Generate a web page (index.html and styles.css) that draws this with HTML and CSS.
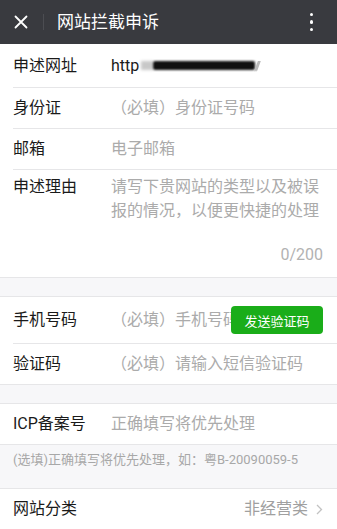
FILE: index.html
```html
<!DOCTYPE html>
<html lang="zh-CN">
<head>
  <meta charset="UTF-8">
  <meta name="viewport" content="width=device-width, initial-scale=1.0">
  <title>网站拦截申诉</title>
  <link rel="stylesheet" href="styles.css">
</head>
<body>

  <!-- Top bar -->
  <header class="topbar">
    <svg class="close-icon" width="14" height="14" viewBox="0 0 14 14">
      <path d="M1.5 1.5L12.5 12.5M12.5 1.5L1.5 12.5" stroke="#fff" stroke-width="1.8" stroke-linecap="round"/>
    </svg>
    <span class="topbar-divider"></span>
    <h1 class="topbar-title">网站拦截申诉</h1>
    <span class="topbar-more"><i></i><i></i><i></i></span>
  </header>

  <!-- Site info -->
  <section class="group group-top">
    <div class="cell cell-first">
      <label class="cell-label">申述网址</label>
      <div class="cell-value">http<span class="smudge"></span><span class="redact"></span><span class="smudge-end"></span></div>
    </div>
    <div class="cell">
      <label class="cell-label">身份证</label>
      <input class="cell-input" type="text" placeholder="（必填）身份证号码">
    </div>
    <div class="cell">
      <label class="cell-label">邮箱</label>
      <input class="cell-input" type="text" placeholder="电子邮箱">
    </div>
    <div class="cell cell-reason">
      <label class="cell-label">申述理由</label>
      <div class="reason-box">
        <textarea class="reason-input" placeholder="请写下贵网站的类型以及被误报的情况，以便更快捷的处理"></textarea>
        <div class="reason-count">0/200</div>
      </div>
    </div>
  </section>

  <!-- Phone verification -->
  <section class="group">
    <div class="cell cell-phone">
      <label class="cell-label">手机号码</label>
      <input class="cell-input" type="tel" placeholder="（必填）手机号码">
      <button class="send-btn">发送验证码</button>
    </div>
    <div class="cell">
      <label class="cell-label">验证码</label>
      <input class="cell-input" type="text" placeholder="（必填）请输入短信验证码">
    </div>
  </section>

  <!-- ICP -->
  <section class="group">
    <div class="cell cell-first">
      <label class="cell-label">ICP备案号</label>
      <input class="cell-input" type="text" placeholder="正确填写将优先处理">
    </div>
  </section>
  <p class="group-tip">(选填)正确填写将优先处理，如：粤B-20090059-5</p>

  <section class="group group-last">
    <div class="cell cell-first cell-link">
      <label class="cell-label">网站分类</label>
      <span class="cell-extra">非经营类</span>
      <svg class="chevron" width="7" height="11" viewBox="0 0 7 11">
        <path d="M1 1L5.5 5.5L1 10" fill="none" stroke="#c2c2c2" stroke-width="1.3"/>
      </svg>
    </div>
  </section>

</body>
</html>
```

FILE: styles.css
```css
/* Basic page styles */
body, html {
  margin: 0;
  padding: 0;
  font-family: Roboto, "Noto Sans CJK SC", sans-serif;
  background-color: #f7f7f9;
  color: #1a1a1a;
}

/* Top bar */
.topbar {
  display: flex;
  align-items: center;
  height: 44px;
  padding-left: 14px;
  background-color: #393a3f;
  color: #fff;
}

.close-icon {
  flex: 0 0 14px;
}

.topbar-divider {
  width: 1px;
  height: 16px;
  margin-left: 15px;
  background-color: #4c4d52;
}

.topbar-title {
  margin: 0 0 0 13px;
  font-size: 17px;
  font-weight: normal;
  line-height: 24px;
}

.topbar-more {
  display: flex;
  flex-direction: column;
  gap: 4px;
  margin-left: auto;
  margin-right: 24px;
}

.topbar-more i {
  display: block;
  width: 3.5px;
  height: 3.5px;
  border-radius: 50%;
  background-color: #fff;
}

/* Groups of cells */
.group {
  margin-top: 18px;
  background-color: #fff;
  border-top: 1px solid #e6e6e8;
  border-bottom: 1px solid #e6e6e8;
}

.group-top {
  margin-top: 0;
  border-top: none;
}

.cell {
  display: flex;
  align-items: center;
  height: 40px;
  margin-left: 13px;
  padding-right: 14px;
  border-top: 1px solid #e6e6e8;
  font-size: 16px;
}

.cell-first {
  border-top: none;
}

.group-top .cell-first {
  height: 43px;
}

.cell-label {
  flex: 0 0 98px;
  line-height: 22px;
}

.cell-value {
  display: flex;
  align-items: center;
  line-height: 22px;
  color: #1a1a1a;
}

/* blurred address */
.smudge {
  display: inline-block;
  width: 12px;
  height: 9px;
  margin-left: 2px;
  background-color: #c8c8c8;
  filter: blur(1.5px);
}

.redact {
  display: inline-block;
  width: 102px;
  height: 9px;
  background-color: #111;
  border-radius: 2px;
  filter: blur(1.2px);
}

.smudge-end {
  display: inline-block;
  width: 3px;
  height: 10px;
  margin-left: 1px;
  background-color: #bbb;
  transform: skewX(-20deg);
  filter: blur(0.6px);
}

.cell-input {
  flex: 1;
  min-width: 0;
  padding: 0;
  border: none;
  outline: none;
  background: transparent;
  font: inherit;
  line-height: 22px;
  color: #1a1a1a;
}

.cell-input::placeholder,
.reason-input::placeholder {
  color: #ababab;
}

/* Reason cell */
.cell-reason {
  align-items: flex-start;
  height: auto;
  padding-top: 5px;
  padding-bottom: 10px;
}

.cell-reason .cell-label {
  line-height: 24px;
}

.reason-box {
  flex: 1;
}

.reason-input {
  display: block;
  width: 100%;
  height: 48px;
  padding: 0;
  border: none;
  outline: none;
  resize: none;
  overflow: hidden;
  font: inherit;
  line-height: 24px;
}

.reason-count {
  margin-top: 20px;
  line-height: 24px;
  text-align: right;
  color: #b2b2b2;
}

/* Phone cell */
.group .cell-phone {
  height: 46px;
  border-top: none;
}

.send-btn {
  flex: 0 0 92px;
  height: 28px;
  padding: 0;
  border: none;
  border-radius: 4px;
  background-color: #1aad19;
  color: #fff;
  font-family: inherit;
  font-size: 13px;
}

/* Tip under ICP */
.group-tip {
  margin: 0;
  padding: 6px 13px 19px;
  font-size: 13px;
  line-height: 18px;
  color: #a8a8a8;
}

.group-last {
  margin-top: 0;
}

.cell-link .cell-label {
  flex: 1;
}

.cell-extra {
  color: #a0a0a0;
  line-height: 22px;
}

.chevron {
  margin-left: 8px;
}
```
